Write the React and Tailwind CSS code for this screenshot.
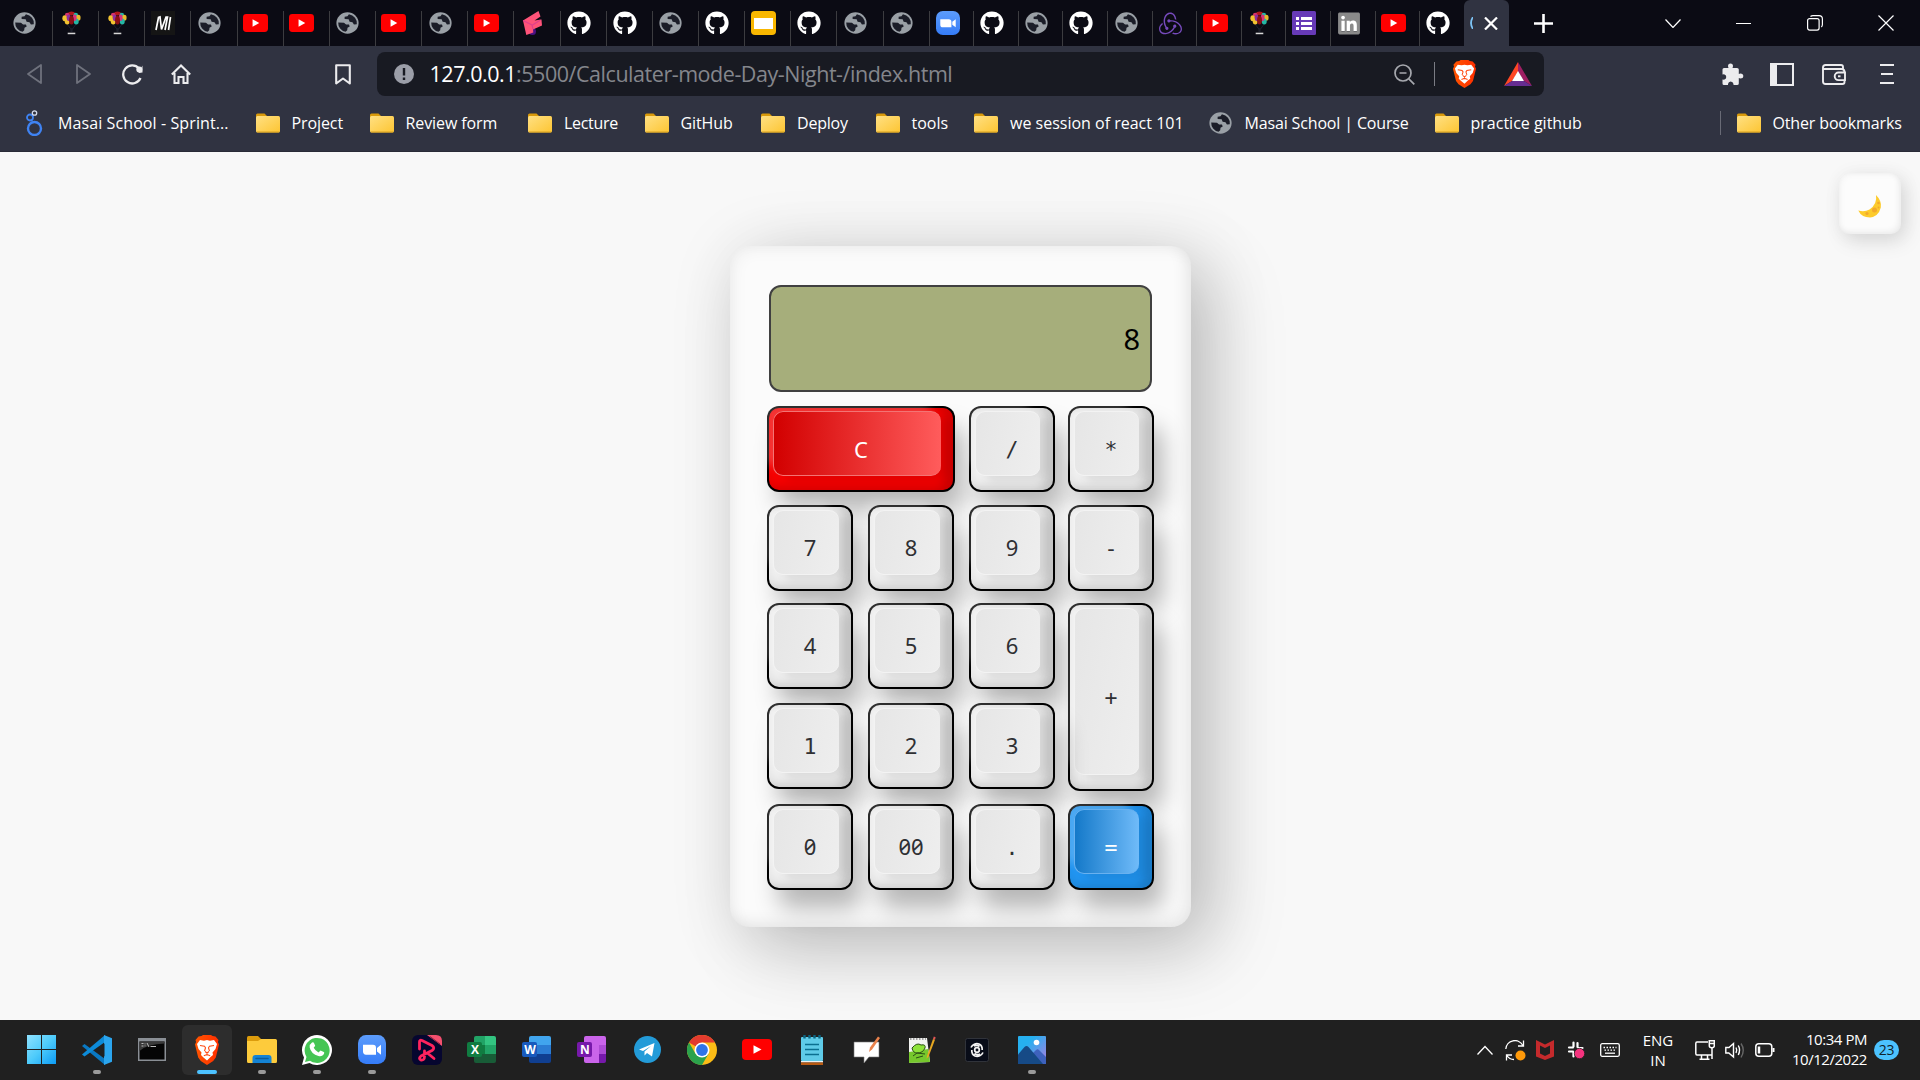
import React from "react";
import { FaGithub, FaLinkedin } from "react-icons/fa";
import { SiRedux } from "react-icons/si";

/* ---------- Site icons ---------- */

const Globe = () => (
  <svg className="h-[22px] w-[23px]" viewBox="0 0 24 24" preserveAspectRatio="none">
    <circle cx="12" cy="12" r="11.6" fill="#9aa0a6" />
    <path d="M13.500 2.400 12 4.500 9 5.200v2.500l4.200.2 1 2.800 3 .4 1.500 2.600 3-.4A9.800 9.800 0 0 0 13.500 2.400Z" fill="#1b1d28" />
    <path d="M2.300 11.500l6 .2 2.200 1.800h3l.8 2.200-2.300 1.600-.3 2.500-1.700 1.800A9.900 9.900 0 0 1 2.300 11.500Z" fill="#1b1d28" />
  </svg>
);

const Youtube = ({ large }) => (
  <svg className={large ? "h-[21px] w-[30px]" : "h-[18px] w-[25px]"} viewBox="0 0 30 21" preserveAspectRatio="none">
    <rect width="30" height="21" rx="4" fill="#f00" />
    <path d="M11.500 6.200v8.600L19.500 10.500Z" fill="#fff" />
  </svg>
);

const Balloons = () => (
  <svg className="h-[24px] w-[19px]" viewBox="0 0 20 25">
    <path d="M4 12l5.500 7h1.500l5-7" stroke="#1d2233" fill="none" />
    <ellipse cx="10" cy="2.500" rx="3.500" ry="2" fill="#b3161c" />
    <ellipse cx="5.500" cy="4" rx="2.400" ry="2.400" fill="#d6336c" />
    <ellipse cx="14.500" cy="4" rx="2.400" ry="2.400" fill="#25b7a5" />
    <ellipse cx="2.800" cy="7.500" rx="2.400" ry="3.200" fill="#f2c230" />
    <ellipse cx="17.200" cy="7" rx="2.400" ry="3.200" fill="#e8b92c" />
    <ellipse cx="5.500" cy="11" rx="2.600" ry="3.200" fill="#f2c230" />
    <ellipse cx="15" cy="11" rx="2.600" ry="3.200" fill="#25b7a5" />
    <ellipse cx="7" cy="7" rx="2" ry="3.400" fill="#8c2f9c" />
    <ellipse cx="13.300" cy="7" rx="2" ry="3.400" fill="#d6337f" />
    <ellipse cx="10" cy="9.500" rx="2.600" ry="4.500" fill="#8b0f14" />
    <path d="M6 23.500h8" stroke="#d7d7d7" strokeWidth="1.600" />
    <path d="M8.500 18h3l-.5 4H9Z" fill="#1a1d2a" />
  </svg>
);

const MLetter = () => (
  <svg className="h-6 w-6 bg-[#151515]" viewBox="0 0 24 24">
    <path d="M5 19 7.500 6.500l1.500-.5 1.500 12.500L15 6h1.500L14 19M17.500 19 19.500 6" fill="none" stroke="#fff" strokeWidth="1.700" />
  </svg>
);

const Ribbon = () => (
  <svg className="h-6 w-[21px]" viewBox="0 0 21 24">
    <circle cx="10.500" cy="20.500" r="3.500" fill="#4a1182" />
    <path d="M1 9.500 16.500 0l2 5.500-6 4 7-1 .5 6-9 4 .3 3-7 2.500Z" fill="#ff5379" />
    <path d="m10.500 14 8-5M1 9.500 10 14l1 4" fill="none" stroke="#e0408c" strokeWidth="1.200" />
  </svg>
);

const Slides = () => (
  <div className="flex h-6 w-[25px] items-center justify-center rounded-sm bg-[#f9b700]">
    <div className="h-[11px] w-[19px] bg-white" />
  </div>
);

const Zoom = ({ large }) => (
  <svg className={large ? "h-[29px] w-[28px]" : "h-6 w-6"} viewBox="0 0 28 28" preserveAspectRatio="none">
    <defs>
      <linearGradient id="zoomBlue" x1="0" y1="0" x2="0" y2="1">
        <stop stopColor="#5c9cfb" />
        <stop offset="1" stopColor="#357cf8" />
      </linearGradient>
    </defs>
    <rect width="28" height="28" rx="8" fill="url(#zoomBlue)" />
    <path d="M5 9.500h10a3 3 0 0 1 3 3V19H8a3 3 0 0 1-3-3ZM19 12.500l4-3v9.500l-4-3Z" fill="#fff" />
  </svg>
);

const Github = () => <FaGithub className="h-6 w-6 text-white" />;
const Redux = () => <SiRedux className="h-[23px] w-[23px] text-[#764abc]" />;

const Forms = () => (
  <svg className="h-6 w-6" viewBox="0 0 24 24">
    <rect width="24" height="24" rx="1.500" fill="#673ab7" />
    <path d="M4 6h3v3H4zM4 11h3v3H4zM4 16h3v3H4zM9 6h11v3H9zM9 11h11v3H9zM9 16h11v3H9z" fill="#fff" />
  </svg>
);

const LinkedIn = () => <FaLinkedin className="h-[25px] w-[22px] text-[#8a8a8a] [background:linear-gradient(#fff,#fff)_center/16px_16px_no-repeat]" />;

const Lion = ({ large }) => (
  <svg className={large ? "h-[30px] w-[26px]" : "h-[28px] w-[25px]"} viewBox="0 0 26 30" preserveAspectRatio="none">
    <defs>
      <linearGradient id="lionRed" x1="0" x2="1">
        <stop stopColor="#ff5500" />
        <stop offset="1" stopColor="#ff2e00" />
      </linearGradient>
    </defs>
    <path d="M7.500 1 9 0h8l1.500 1 3 .5 3 3.500-.6 2 1.100 2.500-3.200 13-2.600 3.500L13 30l-6.200-4-2.600-3.500L1 9.500 2.100 7l-.6-2 3-3.500Z" fill="url(#lionRed)" />
    <path d="m6 5 4 .7L13 5l3 .7 4-.7 3 4-1.500 5-3 3.500.5 2.500-2.500 2L13 25.500 9.500 22.500 7 20l.5-2.500-3-3.500L3 9Z" fill="#fff" />
    <path d="m6 10.500 4.500.8 1 1.500-1 3.200M20 10.500l-4.500.8-1 1.500 1 3.200M11 16.500l2 1.500 2-1.500M13 18v2.500M9.800 20.800 13 19.500l3.200 1.300" fill="none" stroke="#ff4a12" strokeWidth="1.100" />
  </svg>
);

const Folder = () => (
  <svg className="h-5 w-6" viewBox="0 0 24 20">
    <defs>
      <linearGradient id="folderYellow" x1="0" y1="0" x2="1" y2="1">
        <stop stopColor="#ffe083" />
        <stop offset="1" stopColor="#fdc532" />
      </linearGradient>
    </defs>
    <path d="M0 2Q0 .5 1.500.5h7L11 3v6H0Z" fill="#d99a0b" />
    <rect y="3" width="24" height="16.500" rx="1.500" fill="url(#folderYellow)" />
    <path d="M1 19h22" stroke="#d9a11c" />
  </svg>
);

const MasaiMark = () => (
  <svg className="h-[26px] w-[17px]" viewBox="0 0 17 26" fill="none">
    <circle cx="8.500" cy="18.500" r="6.500" stroke="#3f83f2" strokeWidth="2.400" />
    <circle cx="4" cy="7.500" r="3" stroke="#3f83f2" strokeWidth="1.800" />
    <circle cx="8.500" cy="3" r="2.200" stroke="#d5dcec" strokeWidth="1.300" />
  </svg>
);

/* ---------- Tab strip ---------- */

const wideTabs = [
  Balloons, Balloons, MLetter, Globe, Youtube, Youtube, Globe, Youtube, Globe, Youtube,
  Ribbon, Github, Github, Globe, Github, Slides, Github, Globe, Globe,
];
const narrowTabs = [Zoom, Github, Globe, Github, Globe, Redux, Youtube, Balloons, Forms, LinkedIn, Youtube, Github];

function TabStrip() {
  return (
    <div className="flex h-[46px] bg-[#0b0b14]">
      <div className="flex w-[52px] items-center justify-center pr-[3px]">
        <Globe />
      </div>
      {wideTabs.map((Icon, i) => (
        <div key={i} className="flex w-[46.150px] shrink-0 items-end">
          <div className="h-[35px] w-px bg-[#3c3c40]" />
          <div className="flex h-[46px] w-9 items-center justify-center">
            <Icon />
          </div>
        </div>
      ))}
      {narrowTabs.map((Icon, i) => (
        <div key={i} className="flex w-[44.600px] shrink-0 items-end">
          <div className="h-[35px] w-px bg-[#3c3c40]" />
          <div className="flex h-[46px] w-9 items-center justify-center">
            <Icon />
          </div>
        </div>
      ))}
      <div className="flex w-[45px] items-center rounded-t-md bg-[#303341] pl-[6px]">
        <svg className="h-3 w-[3px]" viewBox="0 0 3 12">
          <path d="M3 0Q-1 6 3 12" fill="none" stroke="#7dc4f5" strokeWidth="1.800" />
        </svg>
        <svg className="ml-[11px] h-[13px] w-[14px]" viewBox="0 0 14 13">
          <path d="m1 .5 12 12M13 .5l-12 12" stroke="#fff" strokeWidth="2.200" />
        </svg>
      </div>
      <div className="flex w-[70px] items-center justify-center">
        <svg className="h-[19px] w-[19px]" viewBox="0 0 19 19">
          <path d="M9.500 0v19M0 9.500h19" stroke="#fff" strokeWidth="2.600" />
        </svg>
      </div>
      <div className="ml-[86px] flex items-center text-white">
        <svg className="mr-[55px] h-[9px] w-4" viewBox="0 0 16 9" fill="none" stroke="currentColor" strokeWidth="1.200">
          <path d="m.5.5 7.500 8 7.500-8" />
        </svg>
        <div className="mr-[56px] h-px w-[15px] bg-white" />
        <svg className="mr-[55px] h-4 w-4" viewBox="0 0 16 16" fill="none" stroke="currentColor" strokeWidth="1.200">
          <rect x=".6" y="3.600" width="11.500" height="11.500" rx="2" />
          <path d="M3.500 1.500Q4.500.6 6 .6h6Q15.400.6 15.400 4v5.500q0 1.500-1 2.500" />
        </svg>
        <svg className="h-4 w-4" viewBox="0 0 16 16" fill="none" stroke="currentColor" strokeWidth="1.200">
          <path d="m.5.5 15 15M15.500.5l-15 15" />
        </svg>
      </div>
    </div>
  );
}

/* ---------- Address bar ---------- */

function Toolbar() {
  return (
    <div className="flex h-14 items-center text-[#ececee]">
      <svg className="ml-[27px] h-5 w-[15px]" viewBox="0 0 15 20" fill="none" stroke="#6f727d" strokeWidth="1.800" strokeLinejoin="round">
        <path d="M14 1v18L1 10Z" />
      </svg>
      <svg className="ml-[34px] h-5 w-[15px]" viewBox="0 0 15 20" fill="none" stroke="#6f727d" strokeWidth="1.800" strokeLinejoin="round">
        <path d="M1 1v18l13-9Z" />
      </svg>
      <svg className="ml-[31px] h-[21px] w-[21px]" viewBox="0 0 21 21" fill="none" stroke="currentColor" strokeWidth="2.300">
        <path d="M18.500 14A9 9 0 1 1 17 4.500" />
        <circle cx="17.300" cy="5.500" r="3" fill="currentColor" stroke="none" />
        <path d="M20.500 1.500v7l-4 .5Z" fill="currentColor" stroke="none" />
      </svg>
      <svg className="ml-7 h-5 w-5" viewBox="0 0 20 20" fill="none" stroke="currentColor" strokeWidth="2.100">
        <path d="M.8 10.500 10 1.500l9.200 9M3.500 9v10h4v-6h5v6h4V9" />
      </svg>
      <svg className="ml-36 h-[21px] w-4" viewBox="0 0 16 21" fill="none" stroke="currentColor" strokeWidth="2.100" strokeLinejoin="round">
        <path d="M1.200 1.200h13.600v18.300L8 14.500l-6.800 5Z" />
      </svg>
      <div className="ml-[26px] flex h-11 w-[1167px] items-center rounded-lg bg-[#181a22] pl-[17px]">
        <svg className="h-5 w-5" viewBox="0 0 20 20">
          <circle cx="10" cy="10" r="10" fill="#9b9ea8" />
          <path d="M10 4v7.500M10 13.500V16" stroke="#181a22" strokeWidth="2.400" />
        </svg>
        <p className="ml-[15.500px] w-[964px] whitespace-nowrap font-['Open_Sans','Noto_Sans',sans-serif] text-[21.500px] tracking-[-0.460px] text-[#84868c]">
          <span className="text-white">127.0.0.1</span>:5500/Calculater-mode-Day-Night-/index.html
        </p>
        <svg className="h-[21px] w-[21px]" viewBox="0 0 21 21" fill="none" stroke="#a6a8ae" strokeWidth="1.700">
          <circle cx="9" cy="9" r="8" />
          <path d="m14.800 14.800 5.500 5.500M5.500 9h7" />
        </svg>
        <div className="ml-[19px] h-6 w-px bg-[#7a7c84]" />
        <div className="ml-[17px]"><Lion /></div>
        <svg className="ml-[27px] h-6 w-7" viewBox="0 0 28 24">
          <path d="M14 0 0 24l8-5 6-9Z" fill="#ff4724" />
          <path d="m14 0 14 24-8-5-6-9Z" fill="#9e1f63" />
          <path d="m0 24 8-5h12l8 5Z" fill="#662d91" />
          <path d="m14 9 6 10H8Z" fill="#fff" />
        </svg>
      </div>
      <svg className="ml-[177px] h-[23px] w-[23px]" viewBox="0 0 23 23" fill="currentColor">
        <path d="M1.500 6.500Q1.500 5 3 5h4.500L7 3.300Q7 .5 9.500.5T12 3.300L11.500 5H16q1.800 0 1.800 1.500V11l1.500-.5q3 0 3 2.500t-3 2.500l-1.500-.5v5.500Q17.800 22 16 22h-3.500v-1q-.5-2.500-2.800-2.500T7 21v1H3q-1.500 0-1.500-1.500v-4l1.500.2q2.300-.5 2.300-2.700T3 11.300l-1.500.2Z" />
      </svg>
      <svg className="ml-[26px] h-[23px] w-6" viewBox="0 0 24 23">
        <path d="M1 1h22v21H1Z" fill="none" stroke="currentColor" strokeWidth="2" />
        <path d="M1 1h6v21H1Z" fill="currentColor" />
      </svg>
      <svg className="ml-7 h-[21px] w-6" viewBox="0 0 24 21" fill="none" stroke="currentColor" strokeWidth="1.900">
        <path d="M22.500 16v2q0 2-2 2h-17q-2.500 0-2.500-2.500V3.500Q1 1 3.500 1H19q2 0 2 2v1.500M1 5h18.500q3 0 3 3M23 8.500h-6.500a3.800 3.800 0 0 0 0 7.600H23Z" />
        <path d="M16 12.300h2.500" />
      </svg>
      <div className="ml-[34px] flex w-[14px] flex-col items-center gap-[7px]">
        <div className="h-[2px] w-[14px] bg-[#ececee]" />
        <div className="h-[2px] w-3 bg-[#ececee]" />
        <div className="h-[2px] w-[14px] bg-[#ececee]" />
      </div>
    </div>
  );
}

/* ---------- Bookmarks ---------- */

const bookmarks = [
  { label: "Masai School - Sprint...", width: "w-[233.500px] tracking-[0.100px]", Icon: MasaiMark },
  { label: "Project", width: "w-[114px] tracking-[-0.100px]", Icon: Folder },
  { label: "Review form", width: "w-[158.500px] tracking-[-0.100px]", Icon: Folder },
  { label: "Lecture", width: "w-[116.500px] tracking-[-0.300px]", Icon: Folder },
  { label: "GitHub", width: "w-[116.500px] tracking-[-0.100px]", Icon: Folder },
  { label: "Deploy", width: "w-[114.500px] tracking-[-0.200px]", Icon: Folder },
  { label: "tools", width: "w-[98.500px] tracking-[0px]", Icon: Folder },
  { label: "we session of react 101", width: "w-[234.500px] tracking-[0px]", Icon: Folder },
  { label: "Masai School | Course", width: "w-[226px] tracking-[-0.150px]", Icon: Globe },
  { label: "practice github", width: "w-[285px] tracking-[0px]", Icon: Folder },
];

function Bookmarks() {
  return (
    <div className="flex h-[50px] border-b border-[#292b37] pb-[7px] pl-[22px] font-['Open_Sans','Noto_Sans',sans-serif] text-[16px] text-white">
      {bookmarks.map(({ label, width, Icon }) => (
        <div key={label} className={`flex shrink-0 items-center whitespace-nowrap ${width}`}>
          <div className="mr-[12px] flex w-6 shrink-0 justify-center"><Icon /></div>
          {label}
        </div>
      ))}
      <div className="flex shrink-0 items-center whitespace-nowrap tracking-[-0.150px]">
        <div className="mr-4 h-6 w-px bg-[#696b76]" />
        <Folder />
        <span className="ml-[12px]">Other bookmarks</span>
      </div>
    </div>
  );
}

/* ---------- Calculator ---------- */

const keyShadow =
  "shadow-[inset_-8px_0_8px_rgba(0,0,0,0.15),inset_0_-8px_8px_rgba(0,0,0,0.05),0_0_0_2px_#000,10px_20px_25px_rgba(0,0,0,0.28)]";
const capShadow = "shadow-[-10px_-10px_10px_rgba(255,255,255,0.2),10px_5px_10px_rgba(0,0,0,0.09)]";

const tones = {
  plain: {
    base: "bg-[#f0f0f0] text-[#2f3033]",
    cap: "bg-[linear-gradient(100deg,#e6e6e6,#eeeeee)] border-[#f3f3f3]",
  },
  red: {
    base: "bg-[#f80000] text-white",
    cap: "bg-[linear-gradient(90deg,#d20000,#ff5c5c)] border-[#f37474]",
  },
  blue: {
    base: "bg-[#2196f3] text-white",
    cap: "bg-[linear-gradient(90deg,#1479c9,#70bbf9)] border-[#69b1ef]",
  },
};

const humanist = "pb-[2px] font-['Noto_Sans','Open_Sans',sans-serif] text-[22px] slashed-zero";
const mono = "pt-[2px] font-['DejaVu_Sans_Mono','Liberation_Mono',monospace] text-[21.500px]";

const keys = [
  { label: "C", tone: "red", span: "col-span-2", size: "w-[184px] h-[82px]", cap: "w-[168px]", face: "font-['Noto_Sans','Open_Sans',sans-serif] text-[22px]" },
  { label: "/", face: mono }, { label: "*", face: mono },
  { label: "7", cap: "w-[66px]" }, { label: "8", cap: "w-[66px]" }, { label: "9" }, { label: "-", face: mono },
  { label: "4", cap: "w-[66px]" }, { label: "5", cap: "w-[66px]" }, { label: "6" },
  { label: "+", span: "row-span-2", size: "w-[82px] h-[184px]", face: mono },
  { label: "1", cap: "w-[66px]", face: mono }, { label: "2", cap: "w-[66px]" }, { label: "3" },
  { label: "0", cap: "w-[66px]" }, { label: "00", cap: "w-[66px]" }, { label: ".", face: mono }, { label: "=", tone: "blue", face: mono },
];

function Key({ label, tone = "plain", span = "", size = "w-[82px] h-[82px]", cap = "w-[65px]", face = humanist }) {
  const t = tones[tone];
  return (
    <div className={span}>
      <button className={`relative m-[2px] flex items-center justify-center rounded-[10px] ${size} ${t.base} ${keyShadow}`}>
        <span className={`absolute bottom-[14px] left-1 top-[3px] rounded-[10px] border-y border-l ${cap} ${t.cap} ${capShadow}`} />
        <span className={`relative ${face}`}>{label}</span>
      </button>
    </div>
  );
}

function Calculator() {
  return (
    <div className="mt-[94px] h-[681px] w-[461px] rounded-[20px] bg-[#fbfbfb] pl-[37px] pt-[39px] shadow-[25px_25px_75px_rgba(0,0,0,0.15),10px_10px_70px_rgba(0,0,0,0.15),inset_5px_5px_15px_rgba(0,0,0,0.04),inset_-5px_-5px_15px_rgba(0,0,0,0.08)]">
      <div className="ml-[2px] flex h-[107px] w-[383px] items-center justify-end rounded-xl border-2 border-[#404040] bg-[#a6ae7b] pr-[10px] font-['Noto_Sans',sans-serif] text-[29px] leading-none text-black">
        8
      </div>
      <div className="mt-[14px] grid grid-cols-[101px_101px_99px_86px] grid-rows-[99px_98px_100px_101px_86px]">
        {keys.map((k) => <Key key={k.label} {...k} />)}
      </div>
    </div>
  );
}

function ModeToggle() {
  return (
    <button className="mr-[19px] mt-[21px] flex h-[61px] w-[62px] items-center justify-center justify-self-end rounded-[10px] bg-[#fcfcfc] pt-[6px] shadow-[5px_8px_20px_rgba(0,0,0,0.1),2px_2px_20px_rgba(0,0,0,0.06),inset_2px_2px_6px_rgba(0,0,0,0.03),inset_-2px_-2px_6px_rgba(0,0,0,0.07)]">
      <svg className="h-[23px] w-6" viewBox="0 0 24 23">
        <path d="M18 0Q24 6 22.800 12.500 20.500 21.500 12 22.500 3.500 22.500.3 15.500q6 2 11.200-1Q19.500 9 18 0Z" fill="#fdcb2b" />
        <circle cx="16.500" cy="15" r="2.500" fill="#f2a92c" />
        <circle cx="9" cy="18.500" r="1.600" fill="#f2a92c" />
        <circle cx="20.500" cy="8" r="1.300" fill="#f2a92c" />
        <circle cx="20.500" cy="12.500" r="1" fill="#f2a92c" />
      </svg>
    </button>
  );
}

/* ---------- Taskbar icons ---------- */

const WindowsLogo = () => (
  <svg className="h-[29px] w-[29px]" viewBox="0 0 29 29">
    <defs>
      <linearGradient id="winBlue" gradientUnits="userSpaceOnUse" x1="0" y1="0" x2="29" y2="29">
        <stop stopColor="#8fe2ff" />
        <stop offset=".5" stopColor="#4ecbfb" />
        <stop offset="1" stopColor="#0c9bf5" />
      </linearGradient>
    </defs>
    <path d="M0 0h14v14H0zM15 0h14v14H15zM0 15h14v14H0zM15 15h14v14H15z" fill="url(#winBlue)" />
  </svg>
);

const Code = () => (
  <svg className="h-[30px] w-[30px]" viewBox="0 0 30 30">
    <path d="m0 11 2.500-2L23 24v6Z" fill="#0a78c2" />
    <path d="m0 19.500 2.500 2L23 7V0Z" fill="#0d8bd9" />
    <path d="m22 0 8 3.300v23.400L22 30Z" fill="#2ba5ee" />
    <path d="M22.500 8.500v13L13.500 15Z" fill="#202020" />
  </svg>
);

const Terminal = () => (
  <svg className="h-[23px] w-7" viewBox="0 0 28 23">
    <rect width="28" height="23" fill="#8a8f95" />
    <rect x="1.500" y="3.500" width="25" height="18" fill="#050505" />
    <path d="M1.500 3.500h25v2Q9 6 1.500 13Z" fill="#3a3a3a" />
    <path d="M3.500 5.500h2M3.500 8h2M7 5.500v.8M7 7.500v.8M9 5l2 4M12.500 8.500H18" stroke="#bbb" strokeWidth="1" />
  </svg>
);

const Explorer = () => (
  <svg className="h-[27px] w-[30px]" viewBox="0 0 30 27">
    <path d="M0 1.500Q0 0 1.500 0h9.500l3 3v5H0Z" fill="#dc9c0c" />
    <path d="M0 5h11l3-2h14.500Q30 3 30 4.500v21q0 1.500-1.500 1.500h-27Q0 27 0 25.500Z" fill="#fdcb3c" />
    <path d="M5.500 27v-5q0-3 3-3h13q3 0 3 3v5Z" fill="#1483d4" />
    <path d="M9 22.500h12" stroke="#0b5c9b" strokeWidth="1.500" strokeLinecap="round" />
  </svg>
);

const Whatsapp = () => (
  <svg className="h-[30px] w-[30px]" viewBox="0 0 30 30">
    <path d="m0 30 2-7.500A15 15 0 1 1 7.500 28Z" fill="#fff" />
    <path d="m3 27 1.500-5A12.500 12.500 0 1 1 8 25.700Z" fill="#45c554" />
    <path d="M10 7.500q1.500-.8 2 .5l1.200 2.800-1.500 2q1.500 3 4.800 4.600l2-2 3.300 1.600q1 .5 0 2.300-2 2.700-5.300 1.700-7.500-2-8.800-8.500Q7.500 9 10 7.500Z" fill="#fff" />
  </svg>
);

const Resso = () => (
  <svg className="h-[30px] w-[30px]" viewBox="0 0 30 30">
    <rect width="30" height="30" rx="6" fill="#06062f" />
    <path d="M15 0h9q6 0 6 6v5Z" fill="#f5506e" />
    <path d="M18 1.500 28 9" stroke="#8f2440" strokeWidth="1" />
    <g fill="none" stroke="#ff235e" strokeWidth="2.800" strokeLinejoin="round" strokeLinecap="round">
      <path d="M7.500 14V7q0-2.500 2.500-1.500L20 10.500q3.500 2.500 0 5L9 21q-3 2.500 0 4 3.500.5 3.500-3.500V16M16 18.500l6 5" />
    </g>
  </svg>
);

const office = {
  excel: { letter: "X", dark: "#107c41", colors: ["#21a366", "#33c481", "#107c41", "#21a366", "#185c37", "#185c37"] },
  word: { letter: "W", dark: "#185abd", colors: ["#41a5ee", "#41a5ee", "#2b7cd3", "#2b7cd3", "#103f91", "#103f91"] },
  onenote: { letter: "N", dark: "#7719aa", colors: ["#ca64ea", "#ca64ea", "#ca64ea", "#ae4bd5", "#ca64ea", "#7719aa"] },
};

const Office = ({ kind }) => {
  const { letter, dark, colors } = office[kind];
  return (
    <div className="relative h-[27px] w-[29px] pl-[7px]">
      <div className={`grid h-[27px] w-[22px] overflow-hidden rounded-[2px] ${kind === "onenote" ? "grid-cols-[15px_7px]" : "grid-cols-2"}`}>
        {colors.map((c, i) => <div key={i} style={{ backgroundColor: c }} />)}
      </div>
      <div
        className="absolute left-0 top-[6px] flex h-[15px] w-[15px] items-center justify-center rounded-[2px] font-['Open_Sans',sans-serif] text-[12px] font-bold leading-none text-white"
        style={{ backgroundColor: dark }}
      >
        {letter}
      </div>
    </div>
  );
};

const Telegram = () => (
  <svg className="h-[27px] w-[27px]" viewBox="0 0 27 27">
    <circle cx="13.500" cy="13.500" r="13.500" fill="#239bd8" />
    <path d="m5 13.500 15.500-6.500-2.500 13.500-5-3.500-2.500 2.500v-4l6.500-5.500-8 5Z" fill="#fff" />
  </svg>
);

const Chrome = () => (
  <svg className="h-[30px] w-[30px]" viewBox="0 0 30 30">
    <circle cx="15" cy="15" r="15" fill="#fbbc16" />
    <path d="M15 15 2 7.500A15 15 0 0 1 28 7.500H15Z" fill="#e33b2e" />
    <path d="M2 7.500A15 15 0 0 0 15 30l6.500-11.300L15 15 8.500 18.700Z" fill="#2ba24c" />
    <circle cx="15" cy="15" r="7.500" fill="#fff" />
    <circle cx="15" cy="15" r="5.900" fill="#2f74e8" />
  </svg>
);

const Notepad = () => (
  <svg className="h-[30px] w-[22px]" viewBox="0 0 22 30">
    <rect y="2" width="22" height="24" rx="1" fill="#5fcbe8" />
    <path d="M0 26h22v1.500H0z" fill="#f0f0f0" />
    <path d="M0 27.500h22V30H0z" fill="#b85a12" />
    <path d="M3.500 0v3.500M8.500 0v3.500M13.500 0v3.500M18.500 0v3.500" stroke="#0b6480" strokeWidth="2.400" />
    <path d="M4 9.500h14M4 14.500h14M4 19.500h14" stroke="#0b6f90" strokeWidth="1.600" />
  </svg>
);

const Feedback = () => (
  <svg className="h-[28px] w-[28px]" viewBox="0 0 28 28">
    <path d="M1 6h25v15H16l-5 6v-6H1Z" fill="#fff" stroke="#777" strokeWidth=".6" />
    <path d="m16 16 1-4.500L25 .5l2 1.500-8 11.500Z" fill="#e9824c" />
  </svg>
);

const NotepadPlus = () => (
  <svg className="h-[28px] w-[28px]" viewBox="0 0 28 28">
    <path d="M1 2h18l3 24-21 1Z" fill="#f2f3f0" />
    <path d="m1 16 19-3 2 13-21 1Z" fill="#76c82d" />
    <path d="M2 3h16" stroke="#888" strokeDasharray="1.500 1.500" strokeWidth="1.500" />
    <path d="M4 12q5-6 9-3 5-1 4 3-2 5-8 5-4 0-5-5Z" fill="#8ee339" stroke="#2b4d15" />
    <path d="m5 20 4-3 8 1M8 22l7-2" stroke="#2b4d15" fill="none" />
    <path d="m19 20 6-17 2 .8-6.500 17-2 2Z" fill="#e9a820" />
    <path d="m25 3 .8-2.500 1.800.8-.6 2.500Z" fill="#e05555" />
  </svg>
);

const Swirl = () => (
  <svg className="h-[24px] w-[24px]" viewBox="0 0 24 24">
    <rect x=".5" y=".5" width="23" height="23" rx="2" fill="#080c18" stroke="#30333a" />
    <g fill="none" stroke="#f3f3f3" strokeWidth="1.700">
      <circle cx="12" cy="12" r="2.300" />
      <path d="M6 9.500A6.500 6.500 0 0 1 14 6q3.500 1.500 3.200 6M18 14.500A6.500 6.500 0 0 1 10 18q-3.500-1.500-3.200-6M9 8q3-1.500 5.500.5M15 16q-3 1.500-5.500-.5" />
    </g>
  </svg>
);

const Photos = () => (
  <svg className="h-[28px] w-[28px]" viewBox="0 0 28 28">
    <defs>
      <linearGradient id="photoSky" x1="0" y1="0" x2="1" y2="1">
        <stop offset=".3" stopColor="#26b0f0" />
        <stop offset="1" stopColor="#b07be0" />
      </linearGradient>
    </defs>
    <rect width="28" height="28" rx="1" fill="url(#photoSky)" />
    <circle cx="18.500" cy="6.500" r="2.800" fill="#fff" />
    <path d="m13 19 5-5q1.500-1.500 3 0l7 7v7H14Z" fill="#3e62bd" />
    <path d="M0 18.500 6.500 11q2-2 4 0L25 28H0Z" fill="#164a86" />
  </svg>
);

const apps = [
  { icon: <WindowsLogo /> },
  { icon: <Code />, open: true },
  { icon: <Terminal /> },
  { icon: <Lion large />, active: true },
  { icon: <Explorer />, open: true },
  { icon: <Whatsapp />, open: true },
  { icon: <Zoom large />, open: true },
  { icon: <Resso /> },
  { icon: <Office kind="excel" /> },
  { icon: <Office kind="word" /> },
  { icon: <Office kind="onenote" /> },
  { icon: <Telegram /> },
  { icon: <Chrome /> },
  { icon: <Youtube large /> },
  { icon: <Notepad /> },
  { icon: <Feedback /> },
  { icon: <NotepadPlus /> },
  { icon: <Swirl /> },
  { icon: <Photos />, open: true },
];

function Tray() {
  return (
    <div className="mr-[21px] flex items-center font-['Open_Sans','Noto_Sans',sans-serif] text-[15px] leading-5 text-white">
      <svg className="h-[10px] w-4" viewBox="0 0 16 10" fill="none" stroke="currentColor" strokeWidth="1.300">
        <path d="M.5 9.500 8 1.500l7.500 8" />
      </svg>
      <svg className="ml-3 h-[21px] w-[21px]" viewBox="0 0 21 21" fill="none" stroke="currentColor" strokeWidth="1.300">
        <path d="M.8 9a9 9 0 0 1 17-3.500M18.500.5v5.500H13M1.500 20.500V15H7M1.800 15.500A9 9 0 0 0 9 19.500" />
        <circle cx="15.500" cy="15.500" r="5" fill="#ff9a0a" stroke="none" />
      </svg>
      <svg className="ml-[10px] h-5 w-[18px]" viewBox="0 0 18 20">
        <path d="m0 0 9 4.500L18 0v16.500L9 20l-9-3.500Z" fill="#c52a2c" />
        <path d="M4 5.500 9 8l5-2.500v8L9 16l-5-2.500Z" fill="#202020" />
      </svg>
      <svg className="ml-[13px] h-[19px] w-[19px]" viewBox="0 0 19 19">
        <path d="M6.500 1.500v4M2 6.500h4M10.500 2v4M11.500 7h4M2 10.500h4M6.500 11.500v4M10 11.500v4" stroke="#fff" strokeWidth="2.200" strokeLinecap="round" />
        <circle cx="12.500" cy="12.500" r="5.200" fill="#f5337e" stroke="#202020" strokeWidth=".8" />
      </svg>
      <svg className="ml-[14px] h-[14px] w-5" viewBox="0 0 20 14" fill="none" stroke="currentColor" strokeWidth="1.300">
        <rect x=".7" y=".7" width="18.600" height="12.600" rx="1.500" />
        <path d="M3.500 4.500h13M4.500 7.200h12" strokeDasharray="1.500 1.500" />
        <path d="M5 10.200h10" />
      </svg>
      <div className="ml-[18px] w-10 pb-px text-center">
        <p>ENG</p>
        <p>IN</p>
      </div>
      <svg className="ml-[17px] h-5 w-5" viewBox="0 0 20 20" fill="none" stroke="currentColor" strokeWidth="1.500">
        <path d="M13 2H2Q.8 2 .8 3.500v10Q.8 15 2 15h14.500M6.500 15v4M12.500 15v4M4.500 19.200h10M17 8v11" />
        <path d="M14.300.8h5v5q0 2-2.500 2t-2.500-2ZM14.300 3.500h5" />
      </svg>
      <svg className="ml-[10px] h-[18px] w-5" viewBox="0 0 20 18" fill="none" stroke="currentColor" strokeWidth="1.400">
        <path d="M.8 6.500V12h3l4.700 4V2.500L4 6.500Z" />
        <path d="M11 6.500q1.500 2.500 0 5.500M13.300 4.500q2.500 4.500 0 9.500" />
        <path d="M16 2.500q4.500 6.500 0 14" stroke="#666" />
      </svg>
      <svg className="ml-[10px] h-[14px] w-5" viewBox="0 0 20 14" fill="none" stroke="currentColor" strokeWidth="1.500">
        <rect x=".8" y=".8" width="16" height="12.400" rx="3" />
        <path d="M18.500 5v4" strokeWidth="2" />
        <path d="M4 3.500v7" strokeWidth="2.500" />
      </svg>
      <div className="ml-[18px] w-[74px] whitespace-nowrap pb-[2px] text-[15px] tracking-[-0.450px]">
        <div className="flex justify-end">10:34 PM</div>
        <div className="flex justify-end">10/12/2022</div>
      </div>
      <div className="ml-[7px] flex h-5 w-[25px] items-center justify-center rounded-full bg-[#4cc2ff] text-[14px] tracking-[-0.300px] text-[#10222c]">23</div>
    </div>
  );
}

function Taskbar() {
  return (
    <div className="flex h-[60px] items-center justify-between bg-[#202020] pl-[14px]">
      <div className="flex">
        {apps.map(({ icon, open, active }, i) => (
          <div key={i} className="flex h-[60px] w-[55.050px] items-center justify-center">
            <div className={`flex h-[50px] w-[50px] flex-col items-center rounded-md ${active ? "bg-[#2d2d2d]" : ""}`}>
              <div className="flex h-[45px] items-center pt-[4px]">{icon}</div>
              {open && <div className="h-1 w-2 rounded-full bg-[#9a9a9a]" />}
              {active && <div className="h-1 w-5 rounded-full bg-[#4cc2ff]" />}
            </div>
          </div>
        ))}
      </div>
      <Tray />
    </div>
  );
}

export default function App() {
  return (
    <div className="flex h-[1080px] w-[1920px] flex-col overflow-hidden">
      <header className="bg-[#303341]">
        <TabStrip />
        <Toolbar />
        <Bookmarks />
      </header>
      <main className="grid h-[868px] grid-cols-[730px_461px_1fr] items-start overflow-hidden bg-[#f8f8f8]">
        <div />
        <Calculator />
        <ModeToggle />
      </main>
      <Taskbar />
    </div>
  );
}
